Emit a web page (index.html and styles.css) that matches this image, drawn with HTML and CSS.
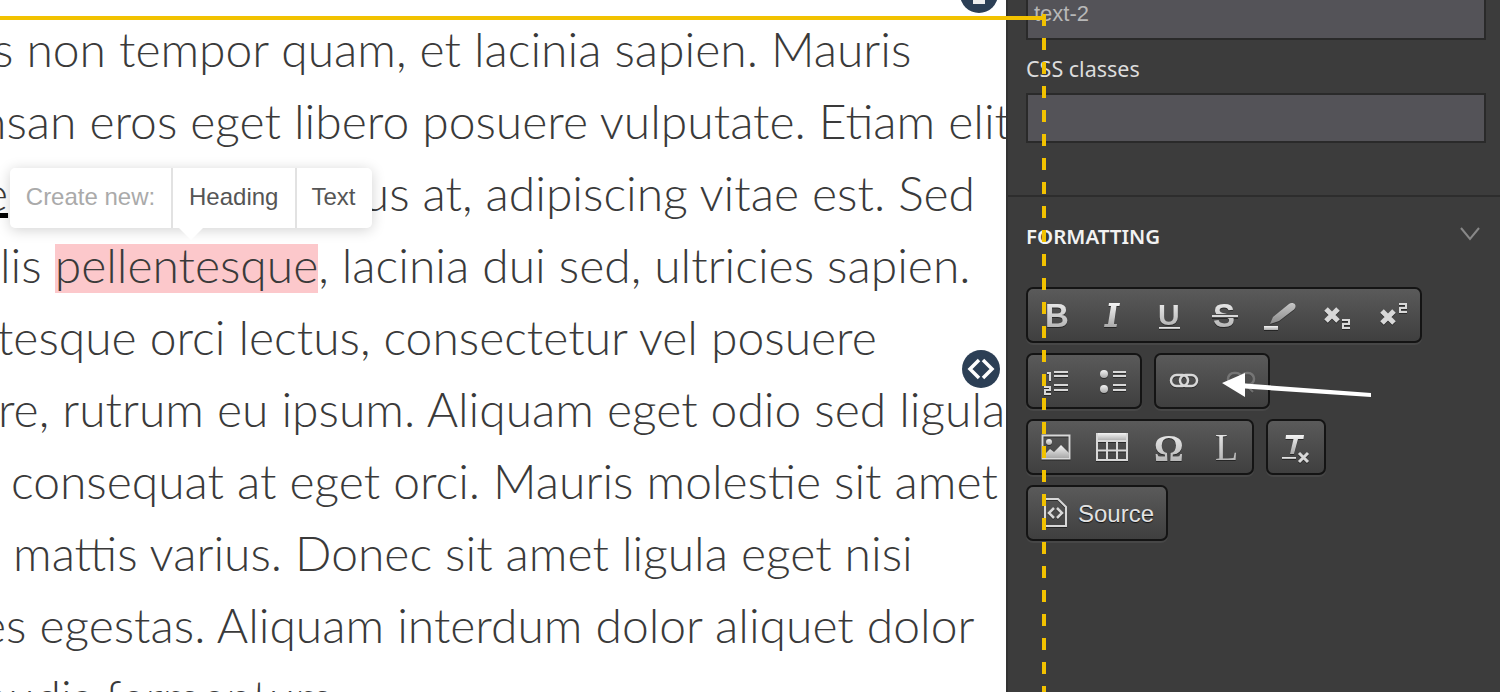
FILE: index.html
```html
<!DOCTYPE html>
<html>
	<head>
		<meta charset="UTF-8">
		<title>Editor</title>
		<link rel="stylesheet" href="styles.css">
	</head>
	<body>
		<svg class="defs" width="0" height="0">
			<defs>
				<linearGradient id="metal" x1="0" y1="0" x2="0" y2="1">
					<stop offset="0" stop-color="#f4f4f4"/>
					<stop offset="1" stop-color="#a9a9a9"/>
				</linearGradient>
			</defs>
		</svg>
		<div id="wrap">
			<div class="editor">
				<div class="line l1">s non tempor quam, et lacinia sapien. Mauris</div>
				<div class="line l2">nsan eros eget libero posuere vulputate. Etiam elit</div>
				<div class="line l3"><span class="link">e</span><span class="hidden-word">lementum risus</span>us at, adipiscing vitae est. Sed</div>
				<div class="line l4">lis <span class="mark">pellentesque</span>, lacinia dui sed, ultricies sapien.</div>
				<div class="line l5">tesque orci lectus, consectetur vel posuere</div>
				<div class="line l6">re, rutrum eu ipsum. Aliquam eget odio sed ligula</div>
				<div class="line l7">consequat at eget orci. Mauris molestie sit amet</div>
				<div class="line l8">mattis varius. Donec sit amet ligula eget nisi</div>
				<div class="line l9">es egestas. Aliquam interdum dolor aliquet dolor</div>
				<div class="line l10">audis fermentum</div>
				<div class="popover">
					<span class="pop-label">Create new:</span>
					<span class="pop-item pop-heading">Heading</span>
					<span class="pop-item pop-text">Text</span>
				</div>
			</div>
			<div class="sidebar">
				<div class="field field-top">
					<div class="input">text-2</div>
				</div>
				<div class="field">
					<label class="label">CSS classes</label>
					<div class="input"></div>
				</div>
				<div class="section">
					<div class="section-head">
						<h3 class="section-title">FORMATTING</h3>
						<svg class="chevron" width="20" height="14" viewBox="0 0 20 14"><path d="M1 1l9 11 9-11"/></svg>
					</div>
					<div class="toolbar">
						<div class="row">
							<div class="group">
								<span class="tool"><svg class="ico" viewBox="0 0 32 32"><text class="g-text bold" x="5" y="28" font-size="33">B</text></svg></span>
								<span class="tool"><svg class="ico" viewBox="0 0 32 32"><path class="g" d="M13 4h11l-.5 3h-3L18 25h3l-.5 3H8l.5-3h3.500L15 7h-2.500z"/></svg></span>
								<span class="tool"><svg class="ico" viewBox="0 0 32 32"><text class="g-text bold" x="6" y="26" font-size="30">U</text><rect class="g" x="7" y="28" width="21" height="2"/></svg></span>
								<span class="tool"><svg class="ico" viewBox="0 0 32 32"><text class="g-text bold" x="5" y="28" font-size="33">S</text><rect fill="#4a4a4a" x="4" y="15" width="26" height="4"/><rect fill="#d8d8d8" x="4" y="16" width="26" height="2"/></svg></span>
								<span class="tool"><svg class="ico" viewBox="0 0 32 32"><rect class="g g-low" x="0" y="27" width="14" height="4"/><path class="g g-pen" d="M6 25l3-7L25 5c2-1.500 5-1 6 .5s.5 3.500-1 5L15 22z"/></svg></span>
								<span class="tool"><svg class="ico" viewBox="0 0 32 32"><path class="x" d="M6 10l12 12M18 10L6 22"/><path class="digit" d="M22 21h7v4h-6v4h7"/></svg></span>
								<span class="tool"><svg class="ico" viewBox="0 0 32 32"><path class="x" d="M6 12l12 12M18 12L6 24"/><path class="digit" d="M23 5h7v4h-6v4h7"/></svg></span>
							</div>
						</div>
						<div class="row">
							<div class="group">
								<span class="tool"><svg class="ico" viewBox="0 0 32 32"><path class="digit" d="M7 8h3v8M4 22h6v3H5v4h6"/><path class="rule" d="M14 7h14M14 11h14M14 20h14M14 25h14"/></svg></span>
								<span class="tool"><svg class="ico" viewBox="0 0 32 32"><circle class="g" cx="8" cy="9" r="4"/><circle class="g" cx="8" cy="24" r="4"/><path class="rule" d="M17 7h13M17 11h13M17 20h13M17 25h13"/></svg></span>
							</div>
							<div class="group">
								<span class="tool"><svg class="ico" viewBox="0 0 32 32"><rect class="chain" x="3" y="10" width="17" height="11" rx="5.500"/><rect class="chain" x="12" y="10" width="17" height="11" rx="5.500"/></svg></span>
								<span class="tool"><svg class="ico dim" viewBox="0 0 32 32"><rect class="chain" x="4" y="8" width="14" height="12" rx="6"/><rect class="chain" x="17" y="8" width="13" height="12" rx="6"/><path class="rule" d="M24 22l5 5"/></svg></span>
							</div>
						</div>
						<div class="row">
							<div class="group">
								<span class="tool"><svg class="ico" viewBox="0 0 32 32"><rect class="frame" x="2.500" y="4.500" width="27" height="23"/><circle class="g" cx="9" cy="11" r="3"/><path class="g" d="M3 25l7-7 4 3 7-7 8 8v5H3z"/></svg></span>
								<span class="tool"><svg class="ico" viewBox="0 0 32 32"><rect class="g" x="0" y="2" width="32" height="8"/><path class="frame" d="M1 2v27h30V2M1 10h30M1 19.500h30M11 10v19M21 10v19"/></svg></span>
								<span class="tool"><svg class="ico" viewBox="0 0 32 32"><text class="g-text serif-b" x="2" y="30" font-size="37">Ω</text></svg></span>
								<span class="tool"><svg class="ico" viewBox="0 0 32 32"><text class="g-text serif" x="7" y="29" font-size="38">L</text></svg></span>
							</div>
							<div class="group">
								<span class="tool"><svg class="ico" viewBox="0 0 32 32"><path class="g" d="M6 4h18l-.5 4h-5.500L14 23h-4l3.500-15H5.500z"/><rect class="g" x="2" y="26" width="14" height="2"/><path class="x x-small" d="M19 22l9 9M28 22l-9 9"/></svg></span>
							</div>
						</div>
						<div class="row">
							<div class="group">
								<span class="tool tool-text">
									<svg class="ico" viewBox="0 0 32 32"><path class="frame" d="M5 2h13l8 8v19H5z"/><path class="chain-thin" d="M14 11l-5 5 5 5M17 11l5 5-5 5"/></svg>
									<span class="tool-label">Source</span>
								</span>
							</div>
						</div>
					</div>
				</div>
			</div>
		</div>

		<div class="guide-h"></div>
		<div class="guide-v"></div>
		<div class="handle handle-top"><svg width="12" height="14" viewBox="0 0 12 14"><rect x="0" y="0" width="12" height="14" fill="#eee"/></svg></div>
		<div class="handle handle-mid"><svg width="28" height="22" viewBox="0 0 28 22"><path d="M12 2L3 11l9 9M16 2l9 9-9 9" fill="none" stroke="#fff" stroke-width="3.500"/></svg></div>
		<svg class="arrow" width="152" height="26" viewBox="0 0 152 26"><path d="M1 10L24 0v10.500L150 20v4L24 15.500V24z" fill="#fff"/></svg>
	</body>
</html>
```

FILE: styles.css
```css
html,body{
	margin: 0;
	padding: 0;
	height: 692px;
	overflow: hidden;
}
.defs{
	position: absolute;
}
#wrap{
	display: flex;
	height: 692px;
	background: #fff;
}

/* text side */
.editor{
	position: relative;
	flex: none;
	width: 1006px;
	height: 692px;
	padding-top: 13px;
	box-sizing: border-box;
	overflow: hidden;
	font-family: "Lato", "Liberation Sans", sans-serif;
	font-weight: 300;
	font-size: 48px;
	line-height: 72px;
	color: #3a3a3a;
}
.line{
	height: 72px;
	white-space: nowrap;
}
.l1{ margin-left: -7px; }
.l2{ margin-left: -20px; }
.l3{ margin-left: -17px; }
.l4{ margin-left: 0; }
.l5{ margin-left: -3px; }
.l6{ margin-left: -2px; }
.l7{ margin-left: 11px; }
.l8{ margin-left: 13px; }
.l9{ margin-left: -19px; }
.l10{ margin-left: -15px; }
.link{
	text-decoration: underline;
	text-decoration-color: #000;
	text-decoration-thickness: 5px;
	text-underline-offset: 2px;
	text-decoration-skip-ink: none;
}
.hidden-word{
	visibility: hidden;
	margin-right: 40px;
}
.mark{
	background: linear-gradient(#fcc8cb,#fcc8cb) 0 8px/100% 50px no-repeat;
}
.popover{
	position: absolute;
	left: 10px;
	top: 168px;
	display: flex;
	height: 60px;
	background: #fff;
	border-radius: 5px;
	box-shadow: 0 2px 14px rgba(0,0,0,.18);
	font-family: "Liberation Sans", Arial, sans-serif;
	font-weight: 400;
	font-size: 24px;
	line-height: 58px;
	color: #555;
}
.popover:after{
	content: "";
	position: absolute;
	left: 169px;
	top: 60px;
	border-left: 12px solid transparent;
	border-right: 12px solid transparent;
	border-top: 12px solid #fff;
}
.pop-label{
	width: 161px;
	text-align: center;
	color: #aaa;
	box-sizing: border-box;
}
.pop-item{
	border-left: 2px solid #e2e2e2;
}
.pop-heading{
	padding: 0 17px 0 16px;
}
.pop-text{
	padding: 0 17px 0 14px;
}

/* right panel */
.sidebar{
	flex: 1;
	height: 692px;
	background: #3c3c3c;
	border-left: 2px solid #323232;
	font-family: "Noto Sans", sans-serif;
	color: #ddd;
}
.field{
	padding: 0 14px 0 18px;
}
.field-top{
	margin-top: -12px;
}
.label{
	display: block;
	margin-top: 14px;
	height: 39px;
	font-size: 21.500px;
	line-height: 30px;
}
.input{
	box-sizing: border-box;
	height: 50px;
	padding-left: 6px;
	background: #545358;
	border: 2px solid #2a2a2a;
	font-family: "Liberation Sans", Arial, sans-serif;
	font-size: 22px;
	line-height: 46px;
	color: #b8b8b8;
}
.field-top .input{
	height: 52px;
	line-height: 48px;
}
.section{
	margin-top: 52px;
	padding: 0 14px 0 18px;
	border-top: 2px solid #2d2d2d;
}
.section-head{
	display: flex;
	justify-content: space-between;
	align-items: center;
	height: 78px;
	margin-bottom: 12px;
}
.section-title{
	margin: 0;
	font-size: 20.500px;
	font-weight: 600;
	color: #f2f2f2;
}
.chevron{
	margin-right: 6px;
	margin-top: -4px;
	fill: none;
	stroke: #888;
	stroke-width: 2;
}
.row{
	display: flex;
	gap: 12px;
	margin-bottom: 10px;
}
.group{
	display: flex;
	height: 56px;
	box-sizing: border-box;
	border: 2px solid #141414;
	border-radius: 7px;
	background: linear-gradient(#5a5a5a,#3f3f3f);
	box-shadow: 0 2px 0 rgba(255,255,255,.06);
}
.tool{
	display: flex;
	align-items: center;
	justify-content: center;
	width: 56px;
	height: 52px;
}
.tool-text{
	width: 138px;
	justify-content: flex-start;
	padding-left: 12px;
	box-sizing: border-box;
}
.tool-label{
	margin-left: 6px;
	padding-top: 2px;
	font-family: "Liberation Sans", Arial, sans-serif;
	font-size: 24px;
	color: #e2e2e2;
	text-shadow: 0 1px 1px #111;
}
.ico{
	width: 32px;
	height: 32px;
	overflow: visible;
	filter: drop-shadow(0 1px 0 rgba(0,0,0,.45));
}
.dim{
	opacity: .28;
}
.g,.g-text{
	fill: url(#metal);
}
.g-pen{
	opacity: .75;
}
.bold{
	font-family: "Liberation Sans", Arial, sans-serif;
	font-weight: 700;
}
.serif{
	font-family: "Liberation Serif", serif;
}
.serif-b{
	font-family: "Liberation Serif", serif;
	font-weight: 700;
}
.x{
	fill: none;
	stroke: #d8d8d8;
	stroke-width: 5;
}
.x-small{
	stroke-width: 3;
}
.digit,.rule,.frame,.chain,.chain-thin{
	fill: none;
	stroke: #d8d8d8;
}
.digit{
	stroke-width: 2;
}
.rule{
	stroke-width: 2;
}
.frame{
	stroke-width: 2;
}
.chain{
	stroke-width: 2.500;
}
.chain-thin{
	stroke-width: 2.500;
}

/* things laid over the page */
.guide-h{
	position: absolute;
	left: 0;
	top: 16px;
	width: 1044px;
	height: 4px;
	background: #f2c200;
}
.guide-v{
	position: absolute;
	left: 1042px;
	top: 14px;
	width: 4px;
	height: 678px;
	background: repeating-linear-gradient(to bottom,#f2c200 0,#f2c200 12px,transparent 12px,transparent 24px);
}
.handle{
	position: absolute;
	display: flex;
	align-items: center;
	justify-content: center;
	width: 38px;
	height: 38px;
	border-radius: 50%;
	background: #2c3f55;
}
.handle-top{
	left: 960px;
	top: -25px;
	align-items: flex-end;
	padding-bottom: 9px;
	box-sizing: border-box;
}
.handle-mid{
	left: 962px;
	top: 350px;
}
.arrow{
	position: absolute;
	left: 1221px;
	top: 373px;
}
```
